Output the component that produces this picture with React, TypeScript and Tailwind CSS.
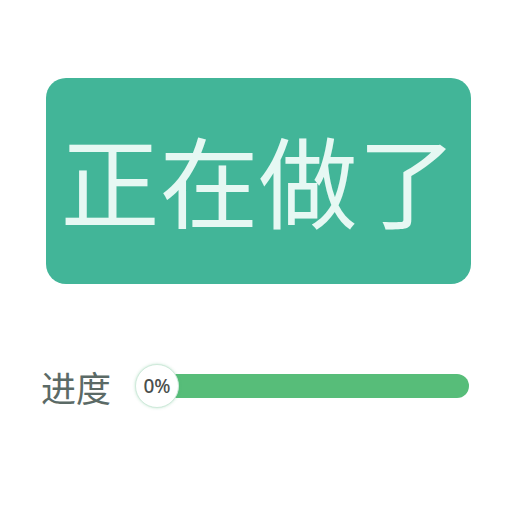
import React from 'react';

const cjk = { fontFamily: '"Noto Sans CJK SC", "Noto Sans", sans-serif' };

export default function App() {
  const progress = 0;

  return (
    <div className="w-[512px] h-[512px] bg-white flex flex-col" style={cjk}>
      {/* Status card */}
      <div className="mt-[78px] ml-[46px] w-[425px] h-[206px] rounded-[20px] bg-[#42b598] flex items-center justify-center pb-[6px]">
        <span className="text-[99px] leading-none text-[#e6f8f3]">正在做了</span>
      </div>

      {/* Progress */}
      <div className="mt-[80px] ml-[41px] flex items-center">
        <span className="text-[35px] leading-none text-[#5b6a66]">进度</span>
        <div className="relative ml-[24px] w-[334px] h-[44px] flex items-center">
          <div className="ml-[22px] w-[312px] h-[24px] rounded-full bg-[#57bd79]">
            <div className="h-full" style={{ width: `${progress}%` }} />
          </div>
          <div className="absolute left-0 top-0 w-[44px] h-[44px] rounded-full bg-white border border-[#cfeadb] shadow-[0_0_3px_rgba(80,180,120,0.35)] flex items-center justify-center">
            <span className="text-[19px] font-medium leading-none text-[#4a4f4d]" style={{ fontFamily: '"Noto Sans", sans-serif' }}>
              {progress}%
            </span>
          </div>
        </div>
      </div>
    </div>
  );
}
